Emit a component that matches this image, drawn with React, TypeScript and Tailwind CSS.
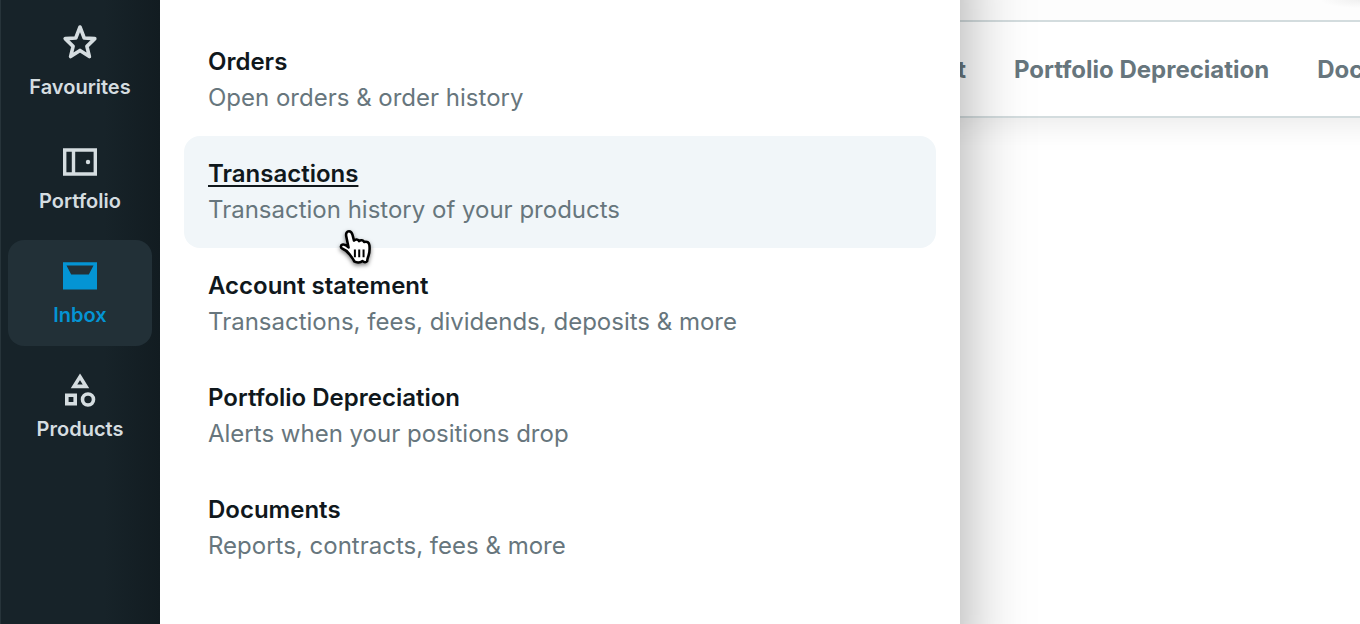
import type { ReactNode } from "react";

const strokeProps = { fill: "none", stroke: "currentColor" };

function StarIcon() {
  return (
    <svg viewBox="0 0 48 48" className="size-12" aria-hidden="true" {...strokeProps} strokeWidth="3.6" strokeLinejoin="round">
      <path d="M24 3 L28.2 14 L38.8 14.6 L30.9 22.4 L33.4 32.6 L24 26.4 L14.6 32.6 L17.1 22.4 L9.2 14.6 L19.8 14 Z" />
    </svg>
  );
}

function PortfolioIcon() {
  return (
    <svg viewBox="0 0 48 48" className="size-12" aria-hidden="true" {...strokeProps} strokeWidth="3.4">
      <path d="M8.7 12 H39.3 V36 H8.7 Z M17.5 12 V36" />
      <circle cx="32" cy="24" r="2.2" fill="currentColor" stroke="none" />
    </svg>
  );
}

function InboxIcon() {
  return (
    <svg viewBox="0 0 48 48" className="size-12" aria-hidden="true">
      <path fill="currentColor" fillRule="evenodd" d="M7 10.3 H41 V37.5 H7 Z M10.5 13.6 L15.2 22.5 H32.8 L37.5 13.6 Z" />
    </svg>
  );
}

function ProductsIcon() {
  return (
    <svg viewBox="0 0 48 48" className="size-12" aria-hidden="true" {...strokeProps} strokeWidth="3.6">
      <path d="M24 10.8 L30 20.4 H18 Z" />
      <path d="M10.8 29.3 H19.2 V37.7 H10.8 Z" />
      <circle cx="32" cy="33.5" r="5.5" />
    </svg>
  );
}

const sections: { label: string; icon: ReactNode; active?: boolean }[] = [
  { label: "Favourites", icon: <StarIcon /> },
  { label: "Portfolio", icon: <PortfolioIcon /> },
  { label: "Inbox", icon: <InboxIcon />, active: true },
  { label: "Products", icon: <ProductsIcon /> },
];

const entries = [
  { title: "Orders", text: "Open orders & order history" },
  { title: "Transactions", text: "Transaction history of your products", hovered: true },
  { title: "Account statement", text: "Transactions, fees, dividends, deposits & more" },
  { title: "Portfolio Depreciation", text: "Alerts when your positions drop" },
  { title: "Documents", text: "Reports, contracts, fees & more" },
];

function HandPointer() {
  return (
    <svg
      viewBox="0 0 32 36"
      className="absolute left-[154px] top-[93px] h-10 w-9 drop-shadow-[0_2px_2px_rgba(0,0,0,0.5)]"
      aria-hidden="true"
    >
      <path
        d="M10.2 22.8 C8.6 20.8 6.2 18.4 3.6 17.5 C1.9 16.8 2 14.2 4.2 14 C6 13.8 8 15.2 9.3 16.6 L7.2 6.5 C6.7 3.8 7.8 2 9.7 2 C11.5 2 12.4 3.4 12.9 5.4 L14.2 10.4 C15.4 9 18 9.1 18.8 10.9 C20.1 9.7 22.5 9.9 23.3 11.7 C25.8 10.8 27.8 12 28.1 14.8 C28.4 18.2 28.4 21 27.3 23.8 C26.4 26.2 26.1 27.2 26 29 C25 30.2 23.3 30.3 21.9 28.8 C20 30.3 16.6 30.5 14.4 29.2 C13.8 27.2 11.9 25.2 10.2 22.8 Z"
        fill="#fff"
        stroke="#000"
        strokeWidth="2.3"
        strokeLinejoin="round"
      />
      <path d="M15 18.5 V25.5 M18.9 18.5 V25.5 M22.8 18.5 V25.5" stroke="#000" strokeWidth="1.8" />
    </svg>
  );
}

export default function App() {
  return (
    <div className="relative flex min-h-screen overflow-hidden bg-white font-['Inter',sans-serif] [font-variant-ligatures:no-common-ligatures]">
      <nav
        aria-label="Main"
        className="flex w-40 shrink-0 flex-col gap-2 border-l border-[#27343a] bg-linear-to-r from-[#172329] from-65% to-[#121c21] px-2 pt-3"
      >
        {sections.map((s) => (
          <a
            key={s.label}
            href="#"
            className={`-ml-px flex flex-col items-center rounded-2xl pb-4 pt-3 ${
              s.active ? "bg-[#223037] text-[#0494d4]" : "text-[#d5dde0]"
            }`}
          >
            {s.icon}
            <span className="text-xl font-semibold leading-[30px]">{s.label}</span>
          </a>
        ))}
      </nav>

      <main className="flex min-w-0 flex-1 flex-col">
        <div className="h-5 bg-[#fdfdfd] bg-[radial-gradient(ellipse_40px_8px_at_100%_0%,#f0f0f0,transparent)]" />
        <nav
          aria-label="Inbox"
          className="-mr-16 flex gap-12 whitespace-nowrap border-y-2 border-[#d3dcde] bg-white pl-[253px] pt-0.5 text-2xl font-bold leading-[92px] text-[#67767d] shadow-[0_2px_30px_4px_rgba(0,0,0,0.09)] [clip-path:inset(0_0_-60px_0)]"
        >
          {entries.map((e) => (
            <a key={e.title} href="#">
              {e.title}
            </a>
          ))}
        </nav>
      </main>

      <section
        aria-label="Inbox menu"
        className="absolute -inset-y-16 left-40 w-[800px] bg-white px-6 pt-[88px] shadow-[0_0_64px_rgba(0,0,0,0.36)] [clip-path:inset(0_-120px_0_0)]"
      >
        {entries.map((e) => (
          <a
            key={e.title}
            href="#"
            className={`relative block rounded-2xl px-6 py-5 text-2xl leading-9 ${e.hovered ? "bg-[#f1f6f9]" : ""}`}
          >
            <span
              className={`block font-semibold text-[#10181c] ${
                e.hovered ? "underline decoration-2 underline-offset-[3px]" : ""
              }`}
            >
              {e.title}
            </span>
            <span className="block text-[#67767d]">{e.text}</span>
            {e.hovered && <HandPointer />}
          </a>
        ))}
      </section>
    </div>
  );
}
